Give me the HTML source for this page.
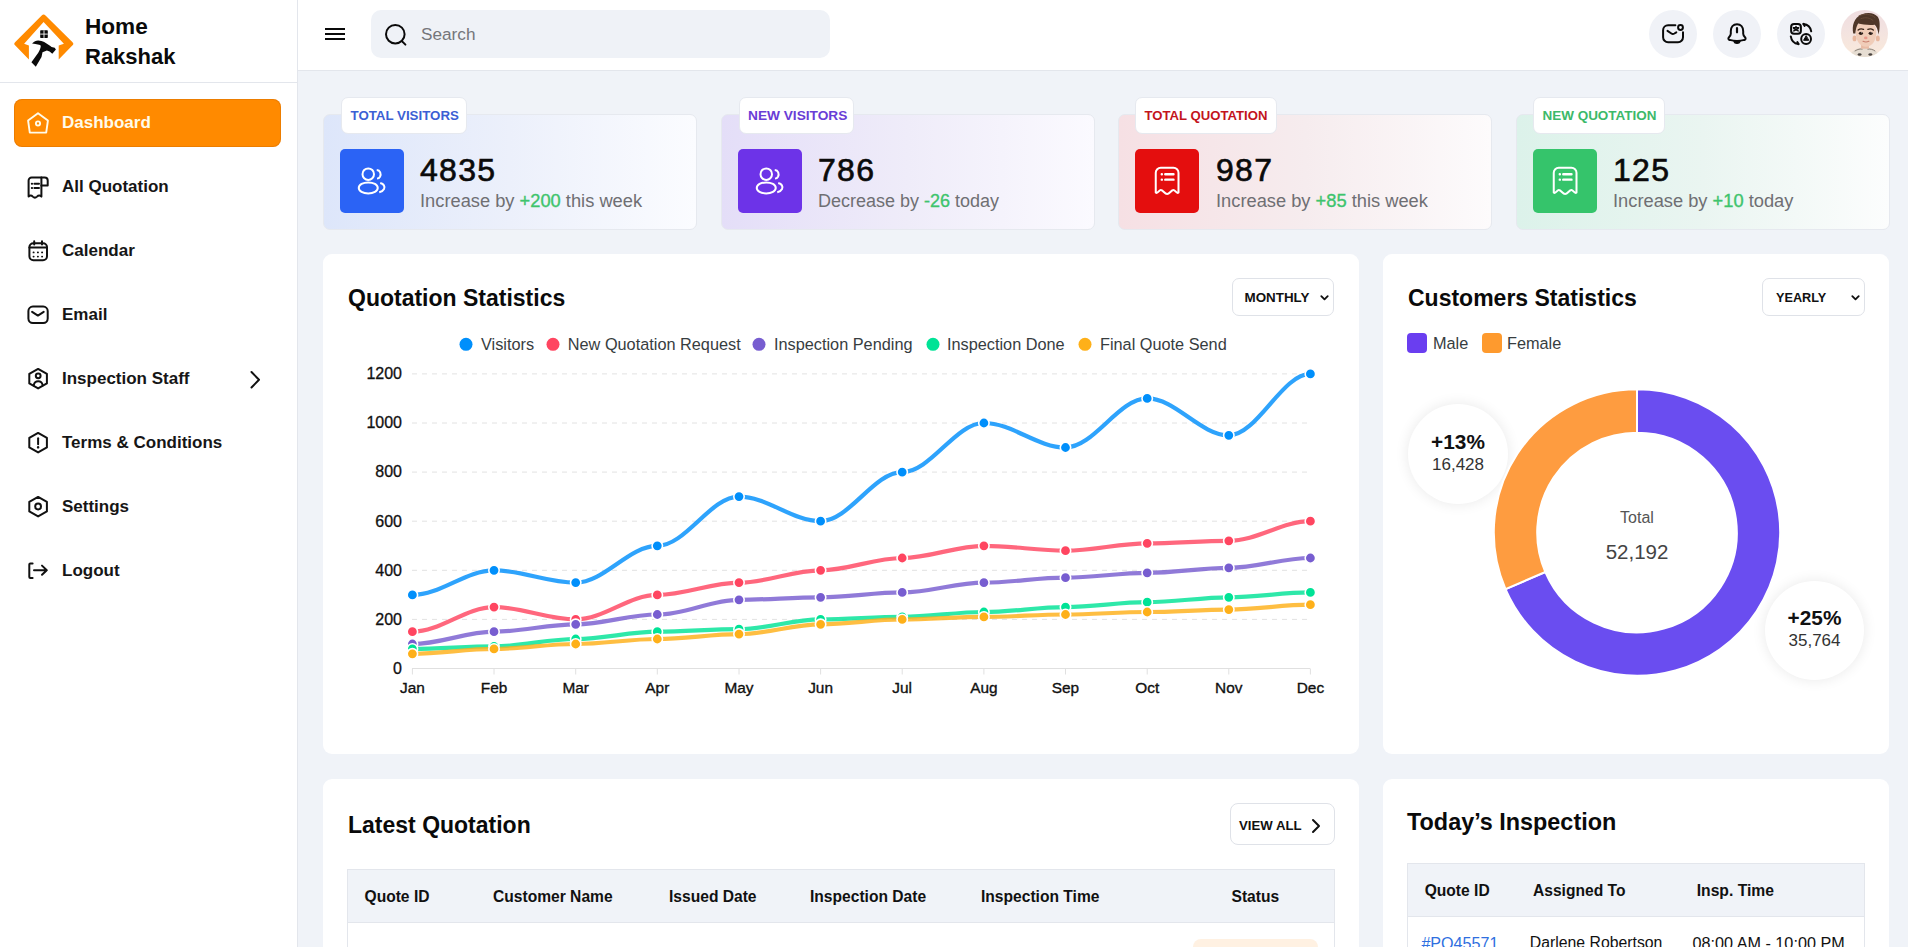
<!DOCTYPE html>
<html><head><meta charset="utf-8"><title>Home Rakshak Dashboard</title>
<style>
*{box-sizing:border-box;margin:0;padding:0}
html,body{width:1908px;height:947px;overflow:hidden}
body{font-family:"Liberation Sans",sans-serif;background:#f0f3f8;color:#111;position:relative}
.abs{position:absolute}
#sidebar{position:absolute;left:0;top:0;width:298px;height:947px;background:#fff;border-right:1px solid #e3e6ec}
#logo{position:absolute;left:0;top:0;width:297px;height:83px;border-bottom:1px solid #e3e6ec}
.brand{position:absolute;left:85px;font-size:22px;font-weight:700;color:#0a0a0a;line-height:1}
.menu{position:absolute;left:14px;width:267px;height:48px;border-radius:8px;font-size:17px;font-weight:700;color:#161616}
.menu.active{background:#ff8a00;color:#fffbea;box-shadow:inset 0 0 0 1px rgba(200,100,0,0.35)}
.menu svg{position:absolute;left:13px;top:13px;width:22px;height:22px;overflow:visible}
.menu span{position:absolute;left:48px;top:15px;line-height:18px;white-space:nowrap}
#header{position:absolute;left:298px;top:0;width:1610px;height:71px;background:#fff;border-bottom:1px solid #e3e6ec}
.search{position:absolute;left:73px;top:10px;width:459px;height:48px;background:#eff2f7;border-radius:10px}
.hicon{position:absolute;top:10px;width:48px;height:48px;border-radius:50%;background:#f0f2f7}
.hicon svg{position:absolute;left:12px;top:12px;width:24px;height:24px}
.stat{position:absolute;top:114px;width:374px;height:116px;border-radius:7px;border:1px solid #e6e9ef}
.tag{position:absolute;top:97px;height:37px;background:#fff;border:1px solid #e6e9ef;border-radius:7px;font-size:13.3px;font-weight:700;line-height:35px;padding:0 8.5px;white-space:nowrap}
.sicon{position:absolute;top:149px;width:64px;height:64px;border-radius:5px}
.sicon svg{position:absolute;left:12px;top:12px;width:40px;height:40px}
.snum{position:absolute;top:153px;font-size:32px;font-weight:400;-webkit-text-stroke:0.65px #0a0a0a;letter-spacing:1.3px;line-height:34px;color:#0a0a0a}
.ssub{position:absolute;top:191px;font-size:18.3px;line-height:20px;color:#6f6f73;white-space:nowrap}
.ssub b{color:#3ec46d;font-weight:400;-webkit-text-stroke:0.35px #3ec46d}
.card{position:absolute;background:#fff;border-radius:9px}
.ctitle{position:absolute;font-size:23px;font-weight:700;line-height:24px;color:#0a0a0a;white-space:nowrap}
.sel{position:absolute;height:38px;border:1px solid #dfe2e8;border-radius:7px;background:#fff;font-size:14px;font-weight:700;line-height:36px;padding-left:13px;color:#111}
.sel svg{position:absolute;top:13px;width:11px;height:11px}
</style></head><body>

<div id="sidebar">
 <div id="logo">
  <svg class="abs" style="left:0;top:0" width="80" height="80" viewBox="0 0 80 80">
   <path d="M41.7,15.5 Q43.6,13.4 45.5,15.5 L72.3,41.9 Q74.4,43.7 72.3,45.5 L58.7,59.4 L58.7,45.6 L63.9,43.7 L43.6,22.1 L24.1,43.7 L28.9,45.6 L28.9,59.4 L15.3,45.5 Q13.2,43.7 15.3,41.9 Z" fill="#ff8a00"/>
   <rect x="40.2" y="30.3" width="7.6" height="7.6" rx="0.6" fill="#0a0a0a"/>
   <path d="M44,30.3 V37.9 M40.2,34.1 H47.8" stroke="#fff" stroke-width="0.9"/>
   <path d="M32.05,43.4 C34,41.6 36,40.4 38.1,40.4 C40.5,40.4 42.5,41.2 44.2,42.05 L50,45.8 L51.6,47 L54.7,47.8 L55.9,49.5 L52.3,53.7 L49.6,51.5 L46.9,50.5 L42.5,52.2 L41.5,56.9 L35.8,66.7 L31.4,62.3 L38.1,52.9 C39.5,50.8 40.6,48.5 40.8,45.8 C40.3,45.2 39.6,44.9 39.1,44.8 C36.5,44.1 34.2,43.6 32.05,43.4 Z" fill="#0a0a0a"/>
  </svg>
  <div class="brand" style="top:15.5px;font-size:22.6px">Home</div>
  <div class="brand" style="top:46px;font-size:22px">Rakshak</div>
 </div>
 <div class="menu active" style="top:99px">
  <svg viewBox="0 0 22 22" fill="none" stroke="#fffbea" stroke-width="1.9" stroke-linejoin="round"><path d="M11 1.3 L20.9 8.6 L19.2 20.6 H2.8 L1.1 8.6 Z"/><circle cx="11" cy="11.5" r="2.1"/></svg>
  <span>Dashboard</span>
 </div>
 <div class="menu" style="top:163px">
  <svg viewBox="0 0 22 22" fill="none" stroke="#111" stroke-width="2" stroke-linejoin="round" stroke-linecap="round"><path d="M14.4 1.5 H4.6 A3 3 0 0 0 1.6 4.5 V20.6 Q3.7 18.4 5.8 20.6 Q7.9 22.6 10 20.6 Q12.2 18.4 14.4 20.6 Z"/><path d="M14.4 1.5 H17.7 A3 3 0 0 1 20.7 4.5 V9.4 H14.4"/><path d="M4.8 7.7 h.3 M7.4 7.7 H12 M4.8 12 h.3 M7.4 12 H12"/></svg>
  <span>All Quotation</span>
 </div>
 <div class="menu" style="top:227px">
  <svg viewBox="0 0 22 22" fill="none" stroke="#111" stroke-width="2" stroke-linejoin="round" stroke-linecap="round"><rect x="2.4" y="3.3" width="17.6" height="17" rx="4"/><path d="M7.2 1.3 V4.6 M15 1.3 V4.6 M2.4 7.6 H20"/><path d="M6.5 12.4 h.2 M10.8 12.4 h.2 M15 12.4 h.2 M6.5 16.6 h.2 M10.8 16.6 h.2 M15 16.6 h.2" stroke-width="1.8"/></svg>
  <span>Calendar</span>
 </div>
 <div class="menu" style="top:291px">
  <svg viewBox="0 0 22 22" fill="none" stroke="#111" stroke-width="2" stroke-linejoin="round" stroke-linecap="round"><rect x="1.4" y="2.6" width="19.3" height="16.4" rx="4.5"/><path d="M5.1 7.9 L10.9 11.6 L16.7 7.9"/></svg>
  <span>Email</span>
 </div>
 <div class="menu" style="top:355px">
  <svg viewBox="0 0 22 22" fill="none" stroke="#111" stroke-width="2" stroke-linejoin="round" stroke-linecap="round"><path d="M11.1 0.9 L19.9 5.9 V15.4 L11.1 20.4 L2.3 15.4 V5.9 Z"/><circle cx="11.2" cy="7.8" r="2.4"/><path d="M6.7 17.4 C7.2 14.6 9 13.3 11.2 13.3 C13.4 13.3 15.2 14.6 15.7 17.4"/></svg>
  <span>Inspection Staff</span>
  <svg style="left:232px;top:13px" viewBox="0 0 22 22" fill="none" stroke="#111" stroke-width="2" stroke-linecap="round" stroke-linejoin="round"><path d="M5.5 4 L13 11.8 L5.5 19.5"/></svg>
 </div>
 <div class="menu" style="top:419px">
  <svg viewBox="0 0 22 22" fill="none" stroke="#111" stroke-width="2" stroke-linejoin="round" stroke-linecap="round"><path d="M11.1 0.9 L19.9 5.9 V15.4 L11.1 20.4 L2.3 15.4 V5.9 Z"/><path d="M11.1 6.3 V12.3"/><path d="M11.1 15.3 v.1" stroke-width="2.4"/></svg>
  <span>Terms &amp; Conditions</span>
 </div>
 <div class="menu" style="top:483px">
  <svg viewBox="0 0 22 22" fill="none" stroke="#111" stroke-width="2" stroke-linejoin="round" stroke-linecap="round"><path d="M11.1 0.9 L19.9 5.9 V15.4 L11.1 20.4 L2.3 15.4 V5.9 Z"/><circle cx="11.1" cy="10.5" r="2.9"/></svg>
  <span>Settings</span>
 </div>
 <div class="menu" style="top:547px">
  <svg viewBox="0 0 22 22" fill="none" stroke="#111" stroke-width="2" stroke-linejoin="round" stroke-linecap="round"><path d="M5.6 3.4 H3.3 A1 1 0 0 0 2.3 4.4 V16.9 A1 1 0 0 0 3.3 17.9 H5.6"/><path d="M7 10.2 H19.8 M15 5.6 L19.8 10.2 L15 14.8"/></svg>
  <span>Logout</span>
 </div>
</div>

<div id="header">
 <svg class="abs" style="left:26px;top:27px" width="22" height="14" viewBox="0 0 22 14"><path d="M1 2 H21 M1 7 H21 M1 12 H21" stroke="#0a0a0a" stroke-width="2.2"/></svg>
 <div class="search">
  <svg class="abs" style="left:12px;top:12px" width="26" height="26" viewBox="0 0 26 26" fill="none" stroke="#0a0a0a" stroke-width="2" stroke-linecap="round"><circle cx="12.3" cy="12.2" r="9.3"/><path d="M19.4 19.6 L22.4 22.6"/></svg>
  <div class="abs" style="left:50px;top:14px;font-size:17.2px;line-height:20px;color:#75767a">Search</div>
 </div>
 <div class="hicon" style="left:1351px">
  <svg viewBox="0 0 24 24" fill="none" stroke="#0a0a0a" stroke-width="2" stroke-linecap="round" stroke-linejoin="round"><path d="M14.4 3.25 H7.1 A5 5 0 0 0 2.1 8.25 V15.2 A5 5 0 0 0 7.1 20.2 H17 A5 5 0 0 0 22 15.2 V10.2"/><path d="M6.5 8.9 L10.4 11.5 C11.3 12.1 12.4 12.1 13.4 11.5 L15.3 10.3"/><circle cx="19.5" cy="5.5" r="2.4"/></svg>
 </div>
 <div class="hicon" style="left:1415px">
  <svg viewBox="0 0 24 24" fill="none" stroke="#0a0a0a" stroke-width="2" stroke-linecap="round" stroke-linejoin="round"><path d="M12 2.2 C8.2 2.2 5.8 5.2 5.8 9.2 V11.8 C5.8 13.2 5 14.2 4 15.2 C3 16.2 3.2 17.6 4.6 17.9 C9.5 19.2 14.5 19.2 19.4 17.9 C20.8 17.6 21 16.2 20 15.2 C19 14.2 18.2 13.2 18.2 11.8 V9.2 C18.2 5.2 15.8 2.2 12 2.2 Z"/><path d="M12 6 V10.3" stroke-width="2.2"/><path d="M8.9 19.6 C9.7 22 14.3 22 15.1 19.6 Z" fill="#0a0a0a" stroke-width="1.2"/></svg>
 </div>
 <div class="hicon" style="left:1479px">
  <svg viewBox="0 0 24 24" fill="none" stroke="#0a0a0a" stroke-width="2" stroke-linecap="round" stroke-linejoin="round"><rect x="2.1" y="1.9" width="9.8" height="9.8" rx="3"/><path d="M4.4 5.8 H9.6 M7 4.6 V5.8 M4.8 8.9 L9.2 6.6 M4.8 6.6 L9.2 8.9" stroke-width="1.5"/><circle cx="17.1" cy="17" r="4.9"/><path d="M17 14 L14.6 18.3 H19.4 Z" fill="#0a0a0a" stroke-width="1"/><path d="M14.4 1.9 C18.6 2.4 21.6 5.4 22.2 9.3"/><path d="M14.6 1.9 L15.6 3.8" stroke-width="2.2"/><path d="M1.8 14.4 C2.4 18.6 5.4 21.6 9.4 22.1"/><path d="M9.4 22 L8.4 20.2" stroke-width="2.2"/></svg>
 </div>
 <div class="abs" style="left:1543px;top:10px;width:47px;height:47px;border-radius:50%;overflow:hidden;background:linear-gradient(180deg,#efdde0 0%,#f3e3e0 45%,#faeadb 100%)">
  <svg width="47" height="47" viewBox="0 0 48 48">
   <path d="M9 48 C10 42 15 38.5 24 38 C33 38.5 38 42 39 48 Z" fill="#e6ddd2"/>
   <path d="M14 42 C17 40 20 39.5 22 40 M27 40 C30 39.5 33 40.5 35 42" stroke="#8a7f76" stroke-width="1" fill="none"/>
   <ellipse cx="19" cy="45.5" rx="2" ry="1.3" fill="#4a4440"/><ellipse cx="30" cy="45.5" rx="2" ry="1.3" fill="#4a4440"/>
   <rect x="20.5" y="32" width="8" height="7.5" fill="#e9bba4"/>
   <ellipse cx="13.8" cy="29" rx="2" ry="3" fill="#e8b79e"/><ellipse cx="37.6" cy="29" rx="2" ry="3" fill="#e8b79e"/>
   <path d="M15 22 C15 14 19 12 25.5 12 C32 12 36 15 36 23 C36 31 32 37.5 25.5 37.5 C19 37.5 15 31 15 22 Z" fill="#f0cdb9"/>
   <path d="M12.5 24 C11 16 13 8 21 4.5 C27 2 34 2.5 37.5 7 C40 10.5 40 17 38.5 25 C37.5 20 36.5 17 34.5 15 C29 15.5 22 15 17.5 13.8 C15.8 16.5 15 20 14.6 24 Z" fill="#4e3628"/>
   <path d="M18 6 C24 3.5 31 4 35 8 M20 9 C25 7 30 8 33 11" stroke="#6a4c3a" stroke-width="0.9" fill="none"/>
   <path d="M17.5 20.5 C19 19.3 21.5 19.2 23 19.8 M27.5 19.8 C29 19.2 31.5 19.3 33 20.5" stroke="#3a2519" stroke-width="1.4" fill="none" stroke-linecap="round"/>
   <ellipse cx="20.3" cy="23.8" rx="2.1" ry="1.7" fill="#2b1a14"/><ellipse cx="30.3" cy="23.8" rx="2.1" ry="1.7" fill="#2b1a14"/>
   <circle cx="20.8" cy="23.3" r="0.5" fill="#fff"/><circle cx="30.8" cy="23.3" r="0.5" fill="#fff"/>
   <ellipse cx="25.3" cy="28.5" rx="1.8" ry="1.4" fill="#e9988a"/>
   <path d="M22.5 32 C24.5 33 26.5 33 28.5 32" stroke="#c9806f" stroke-width="1.1" fill="none" stroke-linecap="round"/>
  </svg>
 </div>
</div>

<div class="stat" style="left:323px;background:linear-gradient(90deg,#dde6fa 0%,#ecf0fb 50%,#fbfcff 100%)"></div>
<div class="tag" style="left:341px;width:126px;color:#3b5fd4">TOTAL VISITORS</div>
<div class="sicon" style="left:340px;background:#2b63f5">
 <svg viewBox="0 0 32 32" fill="none" stroke="#fff" stroke-width="1.6"><circle cx="13" cy="10.5" r="4.6"/><ellipse cx="13" cy="21.5" rx="7.6" ry="4.4"/><path d="M19.8 7.2 C22.6 7.4 23.5 10.2 22.4 12.6 C21.8 13.6 20.9 14 20 14.1"/><path d="M22.6 17.6 C25.4 18.4 26.6 20.2 25.6 22.4 C24.9 23.8 23.6 24.6 21.8 25"/></svg>
</div>
<div class="snum" style="left:420px">4835</div>
<div class="ssub" style="left:420px">Increase by <b>+200</b> this week</div>

<div class="stat" style="left:721px;background:linear-gradient(90deg,#e4def8 0%,#efecf9 50%,#fbfaff 100%)"></div>
<div class="tag" style="left:738.5px;width:115.5px;color:#6a3dd6;font-size:13.7px">NEW VISITORS</div>
<div class="sicon" style="left:738px;background:#6d33e8">
 <svg viewBox="0 0 32 32" fill="none" stroke="#fff" stroke-width="1.6"><circle cx="13" cy="10.5" r="4.6"/><ellipse cx="13" cy="21.5" rx="7.6" ry="4.4"/><path d="M19.8 7.2 C22.6 7.4 23.5 10.2 22.4 12.6 C21.8 13.6 20.9 14 20 14.1"/><path d="M22.6 17.6 C25.4 18.4 26.6 20.2 25.6 22.4 C24.9 23.8 23.6 24.6 21.8 25"/></svg>
</div>
<div class="snum" style="left:818px">786</div>
<div class="ssub" style="left:818px;font-size:18px">Decrease by <b>-26</b> today</div>

<div class="stat" style="left:1118px;background:linear-gradient(90deg,#f6e0e4 0%,#f6ecee 50%,#fdfbfc 100%)"></div>
<div class="tag" style="left:1135px;width:142px;color:#c3141c;font-size:13.15px">TOTAL QUOTATION</div>
<div class="sicon" style="left:1135px;background:#e40e0e">
 <svg viewBox="0 0 32 32" fill="none" stroke="#fff" stroke-width="1.6" stroke-linecap="round" stroke-linejoin="round"><path d="M7 25.2 V9.4 A4 4 0 0 1 11 5.4 H21.2 A4 4 0 0 1 25.2 9.4 V25.2 C23.6 26.6 22.6 23.2 21.2 23.2 C19.2 23.2 18.2 26.4 16.1 26.4 C14 26.4 13 23.2 11 23.2 C9.6 23.2 8.6 26.6 7 25.2 Z"/><path d="M11.8 10.6 h.1 M14.6 10.6 H21.2 M11.8 14.9 h.1 M14.6 14.9 H21.2" stroke-width="1.9"/></svg>
</div>
<div class="snum" style="left:1216px">987</div>
<div class="ssub" style="left:1216px">Increase by <b>+85</b> this week</div>

<div class="stat" style="left:1516px;background:linear-gradient(90deg,#dcf2ea 0%,#eaf5f1 50%,#fcfdfd 100%)"></div>
<div class="tag" style="left:1533px;width:132px;color:#3cb96a;font-size:13.47px">NEW QUOTATION</div>
<div class="sicon" style="left:1533px;background:#35c46b">
 <svg viewBox="0 0 32 32" fill="none" stroke="#fff" stroke-width="1.6" stroke-linecap="round" stroke-linejoin="round"><path d="M7 25.2 V9.4 A4 4 0 0 1 11 5.4 H21.2 A4 4 0 0 1 25.2 9.4 V25.2 C23.6 26.6 22.6 23.2 21.2 23.2 C19.2 23.2 18.2 26.4 16.1 26.4 C14 26.4 13 23.2 11 23.2 C9.6 23.2 8.6 26.6 7 25.2 Z"/><path d="M11.8 10.6 h.1 M14.6 10.6 H21.2 M11.8 14.9 h.1 M14.6 14.9 H21.2" stroke-width="1.9"/></svg>
</div>
<div class="snum" style="left:1613px">125</div>
<div class="ssub" style="left:1613px">Increase by <b>+10</b> today</div>

<div class="card" style="left:323px;top:254px;width:1036px;height:500px"></div>
<div class="ctitle" style="left:348px;top:285.7px">Quotation Statistics</div>
<div class="sel" style="left:1232px;top:278px;width:102px"><span style="font-size:13.4px;position:relative;left:-1.5px;top:-0.5px">MONTHLY</span><svg style="left:86px" viewBox="0 0 12 12" fill="none" stroke="#111" stroke-width="2" stroke-linecap="round" stroke-linejoin="round"><path d="M2.5 4.5 L6 8 L9.5 4.5"/></svg></div>
<div class="card" style="left:1383px;top:254px;width:506px;height:500px"></div>
<div class="ctitle" style="left:1408px;top:285.6px">Customers Statistics</div>
<div class="sel" style="left:1762px;top:278px;width:103px"><span style="font-size:12.7px">YEARLY</span><svg style="left:87px" viewBox="0 0 12 12" fill="none" stroke="#111" stroke-width="2" stroke-linecap="round" stroke-linejoin="round"><path d="M2.5 4.5 L6 8 L9.5 4.5"/></svg></div>
<div class="abs" style="left:1407px;top:333px;width:20px;height:20px;border-radius:4px;background:#6a3ef0"></div>
<div class="abs" style="left:1433px;top:334px;font-size:16.3px;line-height:18px;color:#373d3f">Male</div>
<div class="abs" style="left:1482px;top:333px;width:20px;height:20px;border-radius:4px;background:#fe9a2e"></div>
<div class="abs" style="left:1507px;top:334px;font-size:16.3px;line-height:18px;color:#373d3f">Female</div>
<div class="abs" style="left:1408px;top:403.7px;width:100px;height:100px;border-radius:50%;background:#fff;box-shadow:0 0 14px rgba(0,0,0,0.09)"></div>
<div class="abs" style="left:1408px;top:432.3px;width:100px;text-align:center;font-size:20.8px;font-weight:700;line-height:20px;color:#111">+13%</div>
<div class="abs" style="left:1408px;top:455.8px;width:100px;text-align:center;font-size:17px;line-height:18px;color:#333">16,428</div>
<div class="abs" style="left:1765px;top:580.5px;width:99px;height:99px;border-radius:50%;background:#fff;box-shadow:0 0 14px rgba(0,0,0,0.09)"></div>
<div class="abs" style="left:1765px;top:607.5px;width:99px;text-align:center;font-size:20.8px;font-weight:700;line-height:20px;color:#111">+25%</div>
<div class="abs" style="left:1765px;top:632px;width:99px;text-align:center;font-size:17px;line-height:18px;color:#333">35,764</div>
<div class="abs" style="left:1587px;top:509px;width:100px;text-align:center;font-size:16px;line-height:18px;color:#555">Total</div>
<div class="abs" style="left:1587px;top:541px;width:100px;text-align:center;font-size:20.5px;line-height:22px;color:#444">52,192</div>

<svg class="abs" style="left:0;top:0" width="1908" height="947" viewBox="0 0 1908 947">
<circle cx="466" cy="344.3" r="6.5" fill="#008ffb"/>
<text x="481" y="350.2" font-size="16.3" fill="#373d3f">Visitors</text>
<circle cx="553" cy="344.3" r="6.5" fill="#ff4560"/>
<text x="567.8" y="350.2" font-size="16.3" fill="#373d3f">New Quotation Request</text>
<circle cx="759" cy="344.3" r="6.5" fill="#775dd0"/>
<text x="774" y="350.2" font-size="16.3" fill="#373d3f">Inspection Pending</text>
<circle cx="933" cy="344.3" r="6.5" fill="#00e396"/>
<text x="947" y="350.2" font-size="16.3" fill="#373d3f">Inspection Done</text>
<circle cx="1085" cy="344.3" r="6.5" fill="#feb019"/>
<text x="1100" y="350.2" font-size="16.3" fill="#373d3f">Final Quote Send</text>
<line x1="412" y1="619.4" x2="1310" y2="619.4" stroke="#e2e2e2" stroke-width="1" stroke-dasharray="5 5"/>
<line x1="412" y1="570.3" x2="1310" y2="570.3" stroke="#e2e2e2" stroke-width="1" stroke-dasharray="5 5"/>
<line x1="412" y1="521.2" x2="1310" y2="521.2" stroke="#e2e2e2" stroke-width="1" stroke-dasharray="5 5"/>
<line x1="412" y1="472.1" x2="1310" y2="472.1" stroke="#e2e2e2" stroke-width="1" stroke-dasharray="5 5"/>
<line x1="412" y1="423.0" x2="1310" y2="423.0" stroke="#e2e2e2" stroke-width="1" stroke-dasharray="5 5"/>
<line x1="412" y1="373.9" x2="1310" y2="373.9" stroke="#e2e2e2" stroke-width="1" stroke-dasharray="5 5"/>
<line x1="412" y1="668.5" x2="1310" y2="668.5" stroke="#e0e0e0" stroke-width="1"/>
<line x1="412.4" y1="668.5" x2="412.4" y2="674.5" stroke="#e0e0e0" stroke-width="1"/>
<line x1="494.0" y1="668.5" x2="494.0" y2="674.5" stroke="#e0e0e0" stroke-width="1"/>
<line x1="575.7" y1="668.5" x2="575.7" y2="674.5" stroke="#e0e0e0" stroke-width="1"/>
<line x1="657.3" y1="668.5" x2="657.3" y2="674.5" stroke="#e0e0e0" stroke-width="1"/>
<line x1="739.0" y1="668.5" x2="739.0" y2="674.5" stroke="#e0e0e0" stroke-width="1"/>
<line x1="820.6" y1="668.5" x2="820.6" y2="674.5" stroke="#e0e0e0" stroke-width="1"/>
<line x1="902.2" y1="668.5" x2="902.2" y2="674.5" stroke="#e0e0e0" stroke-width="1"/>
<line x1="983.9" y1="668.5" x2="983.9" y2="674.5" stroke="#e0e0e0" stroke-width="1"/>
<line x1="1065.5" y1="668.5" x2="1065.5" y2="674.5" stroke="#e0e0e0" stroke-width="1"/>
<line x1="1147.2" y1="668.5" x2="1147.2" y2="674.5" stroke="#e0e0e0" stroke-width="1"/>
<line x1="1228.8" y1="668.5" x2="1228.8" y2="674.5" stroke="#e0e0e0" stroke-width="1"/>
<line x1="1310.4" y1="668.5" x2="1310.4" y2="674.5" stroke="#e0e0e0" stroke-width="1"/>
<text x="402" y="673.8" font-size="16" text-anchor="end" fill="#111" stroke="#111" stroke-width="0.3">0</text>
<text x="402" y="624.7" font-size="16" text-anchor="end" fill="#111" stroke="#111" stroke-width="0.3">200</text>
<text x="402" y="575.6" font-size="16" text-anchor="end" fill="#111" stroke="#111" stroke-width="0.3">400</text>
<text x="402" y="526.5" font-size="16" text-anchor="end" fill="#111" stroke="#111" stroke-width="0.3">600</text>
<text x="402" y="477.4" font-size="16" text-anchor="end" fill="#111" stroke="#111" stroke-width="0.3">800</text>
<text x="402" y="428.3" font-size="16" text-anchor="end" fill="#111" stroke="#111" stroke-width="0.3">1000</text>
<text x="402" y="379.2" font-size="16" text-anchor="end" fill="#111" stroke="#111" stroke-width="0.3">1200</text>
<text x="412.4" y="692.8" font-size="15.4" text-anchor="middle" fill="#111" stroke="#111" stroke-width="0.35">Jan</text>
<text x="494.0" y="692.8" font-size="15.4" text-anchor="middle" fill="#111" stroke="#111" stroke-width="0.35">Feb</text>
<text x="575.7" y="692.8" font-size="15.4" text-anchor="middle" fill="#111" stroke="#111" stroke-width="0.35">Mar</text>
<text x="657.3" y="692.8" font-size="15.4" text-anchor="middle" fill="#111" stroke="#111" stroke-width="0.35">Apr</text>
<text x="739.0" y="692.8" font-size="15.4" text-anchor="middle" fill="#111" stroke="#111" stroke-width="0.35">May</text>
<text x="820.6" y="692.8" font-size="15.4" text-anchor="middle" fill="#111" stroke="#111" stroke-width="0.35">Jun</text>
<text x="902.2" y="692.8" font-size="15.4" text-anchor="middle" fill="#111" stroke="#111" stroke-width="0.35">Jul</text>
<text x="983.9" y="692.8" font-size="15.4" text-anchor="middle" fill="#111" stroke="#111" stroke-width="0.35">Aug</text>
<text x="1065.5" y="692.8" font-size="15.4" text-anchor="middle" fill="#111" stroke="#111" stroke-width="0.35">Sep</text>
<text x="1147.2" y="692.8" font-size="15.4" text-anchor="middle" fill="#111" stroke="#111" stroke-width="0.35">Oct</text>
<text x="1228.8" y="692.8" font-size="15.4" text-anchor="middle" fill="#111" stroke="#111" stroke-width="0.35">Nov</text>
<text x="1310.4" y="692.8" font-size="15.4" text-anchor="middle" fill="#111" stroke="#111" stroke-width="0.35">Dec</text>
<path d="M412.4,594.9 C441.0,594.9 465.5,570.3 494.0,570.3 C522.6,570.3 547.1,582.6 575.7,582.6 C604.3,582.6 628.7,545.8 657.3,545.8 C685.9,545.8 710.4,496.6 739.0,496.6 C767.5,496.6 792.0,521.2 820.6,521.2 C849.2,521.2 873.7,472.1 902.2,472.1 C930.8,472.1 955.3,423.0 983.9,423.0 C1012.5,423.0 1036.9,447.5 1065.5,447.5 C1094.1,447.5 1118.6,398.4 1147.2,398.4 C1175.7,398.4 1200.2,435.3 1228.8,435.3 C1257.4,435.3 1281.9,373.9 1310.4,373.9" fill="none" stroke="#008ffb" stroke-opacity="0.82" stroke-width="4.2" stroke-linecap="butt"/>
<circle cx="412.4" cy="594.9" r="5.2" fill="#008ffb" stroke="#fff" stroke-width="1.6"/>
<circle cx="494.0" cy="570.3" r="5.2" fill="#008ffb" stroke="#fff" stroke-width="1.6"/>
<circle cx="575.7" cy="582.6" r="5.2" fill="#008ffb" stroke="#fff" stroke-width="1.6"/>
<circle cx="657.3" cy="545.8" r="5.2" fill="#008ffb" stroke="#fff" stroke-width="1.6"/>
<circle cx="739.0" cy="496.6" r="5.2" fill="#008ffb" stroke="#fff" stroke-width="1.6"/>
<circle cx="820.6" cy="521.2" r="5.2" fill="#008ffb" stroke="#fff" stroke-width="1.6"/>
<circle cx="902.2" cy="472.1" r="5.2" fill="#008ffb" stroke="#fff" stroke-width="1.6"/>
<circle cx="983.9" cy="423.0" r="5.2" fill="#008ffb" stroke="#fff" stroke-width="1.6"/>
<circle cx="1065.5" cy="447.5" r="5.2" fill="#008ffb" stroke="#fff" stroke-width="1.6"/>
<circle cx="1147.2" cy="398.4" r="5.2" fill="#008ffb" stroke="#fff" stroke-width="1.6"/>
<circle cx="1228.8" cy="435.3" r="5.2" fill="#008ffb" stroke="#fff" stroke-width="1.6"/>
<circle cx="1310.4" cy="373.9" r="5.2" fill="#008ffb" stroke="#fff" stroke-width="1.6"/>
<path d="M412.4,631.7 C441.0,631.7 465.5,607.1 494.0,607.1 C522.6,607.1 547.1,619.4 575.7,619.4 C604.3,619.4 628.7,594.9 657.3,594.9 C685.9,594.9 710.4,582.6 739.0,582.6 C767.5,582.6 792.0,570.3 820.6,570.3 C849.2,570.3 873.7,558.0 902.2,558.0 C930.8,558.0 955.3,545.8 983.9,545.8 C1012.5,545.8 1036.9,550.7 1065.5,550.7 C1094.1,550.7 1118.6,543.3 1147.2,543.3 C1175.7,543.3 1200.2,540.8 1228.8,540.8 C1257.4,540.8 1281.9,521.2 1310.4,521.2" fill="none" stroke="#ff4560" stroke-opacity="0.82" stroke-width="4.2" stroke-linecap="butt"/>
<circle cx="412.4" cy="631.7" r="5.2" fill="#ff4560" stroke="#fff" stroke-width="1.6"/>
<circle cx="494.0" cy="607.1" r="5.2" fill="#ff4560" stroke="#fff" stroke-width="1.6"/>
<circle cx="575.7" cy="619.4" r="5.2" fill="#ff4560" stroke="#fff" stroke-width="1.6"/>
<circle cx="657.3" cy="594.9" r="5.2" fill="#ff4560" stroke="#fff" stroke-width="1.6"/>
<circle cx="739.0" cy="582.6" r="5.2" fill="#ff4560" stroke="#fff" stroke-width="1.6"/>
<circle cx="820.6" cy="570.3" r="5.2" fill="#ff4560" stroke="#fff" stroke-width="1.6"/>
<circle cx="902.2" cy="558.0" r="5.2" fill="#ff4560" stroke="#fff" stroke-width="1.6"/>
<circle cx="983.9" cy="545.8" r="5.2" fill="#ff4560" stroke="#fff" stroke-width="1.6"/>
<circle cx="1065.5" cy="550.7" r="5.2" fill="#ff4560" stroke="#fff" stroke-width="1.6"/>
<circle cx="1147.2" cy="543.3" r="5.2" fill="#ff4560" stroke="#fff" stroke-width="1.6"/>
<circle cx="1228.8" cy="540.8" r="5.2" fill="#ff4560" stroke="#fff" stroke-width="1.6"/>
<circle cx="1310.4" cy="521.2" r="5.2" fill="#ff4560" stroke="#fff" stroke-width="1.6"/>
<path d="M412.4,644.0 C441.0,644.0 465.5,631.7 494.0,631.7 C522.6,631.7 547.1,624.3 575.7,624.3 C604.3,624.3 628.7,614.5 657.3,614.5 C685.9,614.5 710.4,599.8 739.0,599.8 C767.5,599.8 792.0,597.3 820.6,597.3 C849.2,597.3 873.7,592.4 902.2,592.4 C930.8,592.4 955.3,582.6 983.9,582.6 C1012.5,582.6 1036.9,577.7 1065.5,577.7 C1094.1,577.7 1118.6,572.8 1147.2,572.8 C1175.7,572.8 1200.2,567.8 1228.8,567.8 C1257.4,567.8 1281.9,558.0 1310.4,558.0" fill="none" stroke="#775dd0" stroke-opacity="0.82" stroke-width="4.2" stroke-linecap="butt"/>
<circle cx="412.4" cy="644.0" r="5.2" fill="#775dd0" stroke="#fff" stroke-width="1.6"/>
<circle cx="494.0" cy="631.7" r="5.2" fill="#775dd0" stroke="#fff" stroke-width="1.6"/>
<circle cx="575.7" cy="624.3" r="5.2" fill="#775dd0" stroke="#fff" stroke-width="1.6"/>
<circle cx="657.3" cy="614.5" r="5.2" fill="#775dd0" stroke="#fff" stroke-width="1.6"/>
<circle cx="739.0" cy="599.8" r="5.2" fill="#775dd0" stroke="#fff" stroke-width="1.6"/>
<circle cx="820.6" cy="597.3" r="5.2" fill="#775dd0" stroke="#fff" stroke-width="1.6"/>
<circle cx="902.2" cy="592.4" r="5.2" fill="#775dd0" stroke="#fff" stroke-width="1.6"/>
<circle cx="983.9" cy="582.6" r="5.2" fill="#775dd0" stroke="#fff" stroke-width="1.6"/>
<circle cx="1065.5" cy="577.7" r="5.2" fill="#775dd0" stroke="#fff" stroke-width="1.6"/>
<circle cx="1147.2" cy="572.8" r="5.2" fill="#775dd0" stroke="#fff" stroke-width="1.6"/>
<circle cx="1228.8" cy="567.8" r="5.2" fill="#775dd0" stroke="#fff" stroke-width="1.6"/>
<circle cx="1310.4" cy="558.0" r="5.2" fill="#775dd0" stroke="#fff" stroke-width="1.6"/>
<path d="M412.4,648.9 C441.0,648.9 465.5,646.4 494.0,646.4 C522.6,646.4 547.1,639.0 575.7,639.0 C604.3,639.0 628.7,631.7 657.3,631.7 C685.9,631.7 710.4,629.2 739.0,629.2 C767.5,629.2 792.0,619.4 820.6,619.4 C849.2,619.4 873.7,616.9 902.2,616.9 C930.8,616.9 955.3,612.0 983.9,612.0 C1012.5,612.0 1036.9,607.1 1065.5,607.1 C1094.1,607.1 1118.6,602.2 1147.2,602.2 C1175.7,602.2 1200.2,597.3 1228.8,597.3 C1257.4,597.3 1281.9,592.4 1310.4,592.4" fill="none" stroke="#00e396" stroke-opacity="0.82" stroke-width="4.2" stroke-linecap="butt"/>
<circle cx="412.4" cy="648.9" r="5.2" fill="#00e396" stroke="#fff" stroke-width="1.6"/>
<circle cx="494.0" cy="646.4" r="5.2" fill="#00e396" stroke="#fff" stroke-width="1.6"/>
<circle cx="575.7" cy="639.0" r="5.2" fill="#00e396" stroke="#fff" stroke-width="1.6"/>
<circle cx="657.3" cy="631.7" r="5.2" fill="#00e396" stroke="#fff" stroke-width="1.6"/>
<circle cx="739.0" cy="629.2" r="5.2" fill="#00e396" stroke="#fff" stroke-width="1.6"/>
<circle cx="820.6" cy="619.4" r="5.2" fill="#00e396" stroke="#fff" stroke-width="1.6"/>
<circle cx="902.2" cy="616.9" r="5.2" fill="#00e396" stroke="#fff" stroke-width="1.6"/>
<circle cx="983.9" cy="612.0" r="5.2" fill="#00e396" stroke="#fff" stroke-width="1.6"/>
<circle cx="1065.5" cy="607.1" r="5.2" fill="#00e396" stroke="#fff" stroke-width="1.6"/>
<circle cx="1147.2" cy="602.2" r="5.2" fill="#00e396" stroke="#fff" stroke-width="1.6"/>
<circle cx="1228.8" cy="597.3" r="5.2" fill="#00e396" stroke="#fff" stroke-width="1.6"/>
<circle cx="1310.4" cy="592.4" r="5.2" fill="#00e396" stroke="#fff" stroke-width="1.6"/>
<path d="M412.4,653.8 C441.0,653.8 465.5,648.9 494.0,648.9 C522.6,648.9 547.1,644.0 575.7,644.0 C604.3,644.0 628.7,639.0 657.3,639.0 C685.9,639.0 710.4,634.1 739.0,634.1 C767.5,634.1 792.0,624.3 820.6,624.3 C849.2,624.3 873.7,619.4 902.2,619.4 C930.8,619.4 955.3,616.9 983.9,616.9 C1012.5,616.9 1036.9,614.5 1065.5,614.5 C1094.1,614.5 1118.6,612.0 1147.2,612.0 C1175.7,612.0 1200.2,609.6 1228.8,609.6 C1257.4,609.6 1281.9,604.7 1310.4,604.7" fill="none" stroke="#feb019" stroke-opacity="0.82" stroke-width="4.2" stroke-linecap="butt"/>
<circle cx="412.4" cy="653.8" r="5.2" fill="#feb019" stroke="#fff" stroke-width="1.6"/>
<circle cx="494.0" cy="648.9" r="5.2" fill="#feb019" stroke="#fff" stroke-width="1.6"/>
<circle cx="575.7" cy="644.0" r="5.2" fill="#feb019" stroke="#fff" stroke-width="1.6"/>
<circle cx="657.3" cy="639.0" r="5.2" fill="#feb019" stroke="#fff" stroke-width="1.6"/>
<circle cx="739.0" cy="634.1" r="5.2" fill="#feb019" stroke="#fff" stroke-width="1.6"/>
<circle cx="820.6" cy="624.3" r="5.2" fill="#feb019" stroke="#fff" stroke-width="1.6"/>
<circle cx="902.2" cy="619.4" r="5.2" fill="#feb019" stroke="#fff" stroke-width="1.6"/>
<circle cx="983.9" cy="616.9" r="5.2" fill="#feb019" stroke="#fff" stroke-width="1.6"/>
<circle cx="1065.5" cy="614.5" r="5.2" fill="#feb019" stroke="#fff" stroke-width="1.6"/>
<circle cx="1147.2" cy="612.0" r="5.2" fill="#feb019" stroke="#fff" stroke-width="1.6"/>
<circle cx="1228.8" cy="609.6" r="5.2" fill="#feb019" stroke="#fff" stroke-width="1.6"/>
<circle cx="1310.4" cy="604.7" r="5.2" fill="#feb019" stroke="#fff" stroke-width="1.6"/>
<path d="M1637.00,389.30 A143.2,143.2 0 1 1 1505.49,589.17 L1545.35,572.00 A99.8,99.8 0 1 0 1637.00,432.70 Z" fill="#6a4df0" stroke="#fff" stroke-width="2"/>
<path d="M1505.49,589.17 A143.2,143.2 0 0 1 1637.00,389.30 L1637.00,432.70 A99.8,99.8 0 0 0 1545.35,572.00 Z" fill="#fe9c40" stroke="#fff" stroke-width="2"/>
</svg>
<div class="card" style="left:323px;top:779px;width:1036px;height:200px"></div>
<div class="ctitle" style="left:348px;top:813.2px">Latest Quotation</div>
<div class="abs" style="left:1230px;top:803px;width:105px;height:42px;border:1px solid #dfe2e8;border-radius:8px;background:#fff">
 <div class="abs" style="left:8px;top:14px;font-size:13.2px;font-weight:700;line-height:16px;color:#111">VIEW ALL</div>
 <svg class="abs" style="left:78px;top:14px" width="14" height="16" viewBox="0 0 14 16" fill="none" stroke="#111" stroke-width="2" stroke-linecap="round" stroke-linejoin="round"><path d="M4 2 L10 8 L4 14"/></svg>
</div>
<div class="abs" style="left:347px;top:869px;width:988px;height:100px;border:1px solid #e3e6ec;background:#fff">
 <div class="abs" style="left:0;top:0;width:986px;height:53px;background:#f0f3f8;border-bottom:1px solid #e3e6ec"></div>
</div>
<div class="abs" style="left:364.5px;top:888px;font-size:15.6px;font-weight:700;line-height:18px;color:#111;white-space:nowrap">Quote ID</div>
<div class="abs" style="left:493px;top:888px;font-size:15.6px;font-weight:700;line-height:18px;color:#111;white-space:nowrap">Customer Name</div>
<div class="abs" style="left:669px;top:888px;font-size:15.6px;font-weight:700;line-height:18px;color:#111;white-space:nowrap">Issued Date</div>
<div class="abs" style="left:810px;top:888px;font-size:15.6px;font-weight:700;line-height:18px;color:#111;white-space:nowrap">Inspection Date</div>
<div class="abs" style="left:981px;top:888px;font-size:15.6px;font-weight:700;line-height:18px;color:#111;white-space:nowrap">Inspection Time</div>
<div class="abs" style="left:1231.5px;top:888px;font-size:15.6px;font-weight:700;line-height:18px;color:#111;white-space:nowrap">Status</div>
<div class="abs" style="left:1193px;top:939px;width:125px;height:30px;border-radius:8px;background:#fff1e2"></div>

<div class="card" style="left:1383px;top:779px;width:506px;height:200px"></div>
<div class="ctitle" style="left:1407px;top:809.6px;font-size:23.4px">Today’s Inspection</div>
<div class="abs" style="left:1407px;top:863px;width:458px;height:100px;border:1px solid #e3e6ec;background:#fff">
 <div class="abs" style="left:0;top:0;width:456px;height:53px;background:#f0f3f8;border-bottom:1px solid #e3e6ec"></div>
</div>
<div class="abs" style="left:1424.7px;top:882px;font-size:15.6px;font-weight:700;line-height:18px;color:#111;white-space:nowrap">Quote ID</div>
<div class="abs" style="left:1533px;top:882px;font-size:15.6px;font-weight:700;line-height:18px;color:#111;white-space:nowrap">Assigned To</div>
<div class="abs" style="left:1696.7px;top:882px;font-size:15.7px;font-weight:700;line-height:18px;color:#111;white-space:nowrap">Insp. Time</div>
<div class="abs" style="left:1421.4px;top:934px;font-size:16.1px;line-height:18px;color:#2f6fe0;white-space:nowrap">#PQ45571</div>
<div class="abs" style="left:1529.8px;top:934px;font-size:15.8px;line-height:18px;color:#111;white-space:nowrap">Darlene Robertson</div>
<div class="abs" style="left:1692.6px;top:934px;font-size:16.2px;line-height:18px;color:#111;white-space:nowrap">08:00 AM - 10:00 PM</div>

</body></html>
